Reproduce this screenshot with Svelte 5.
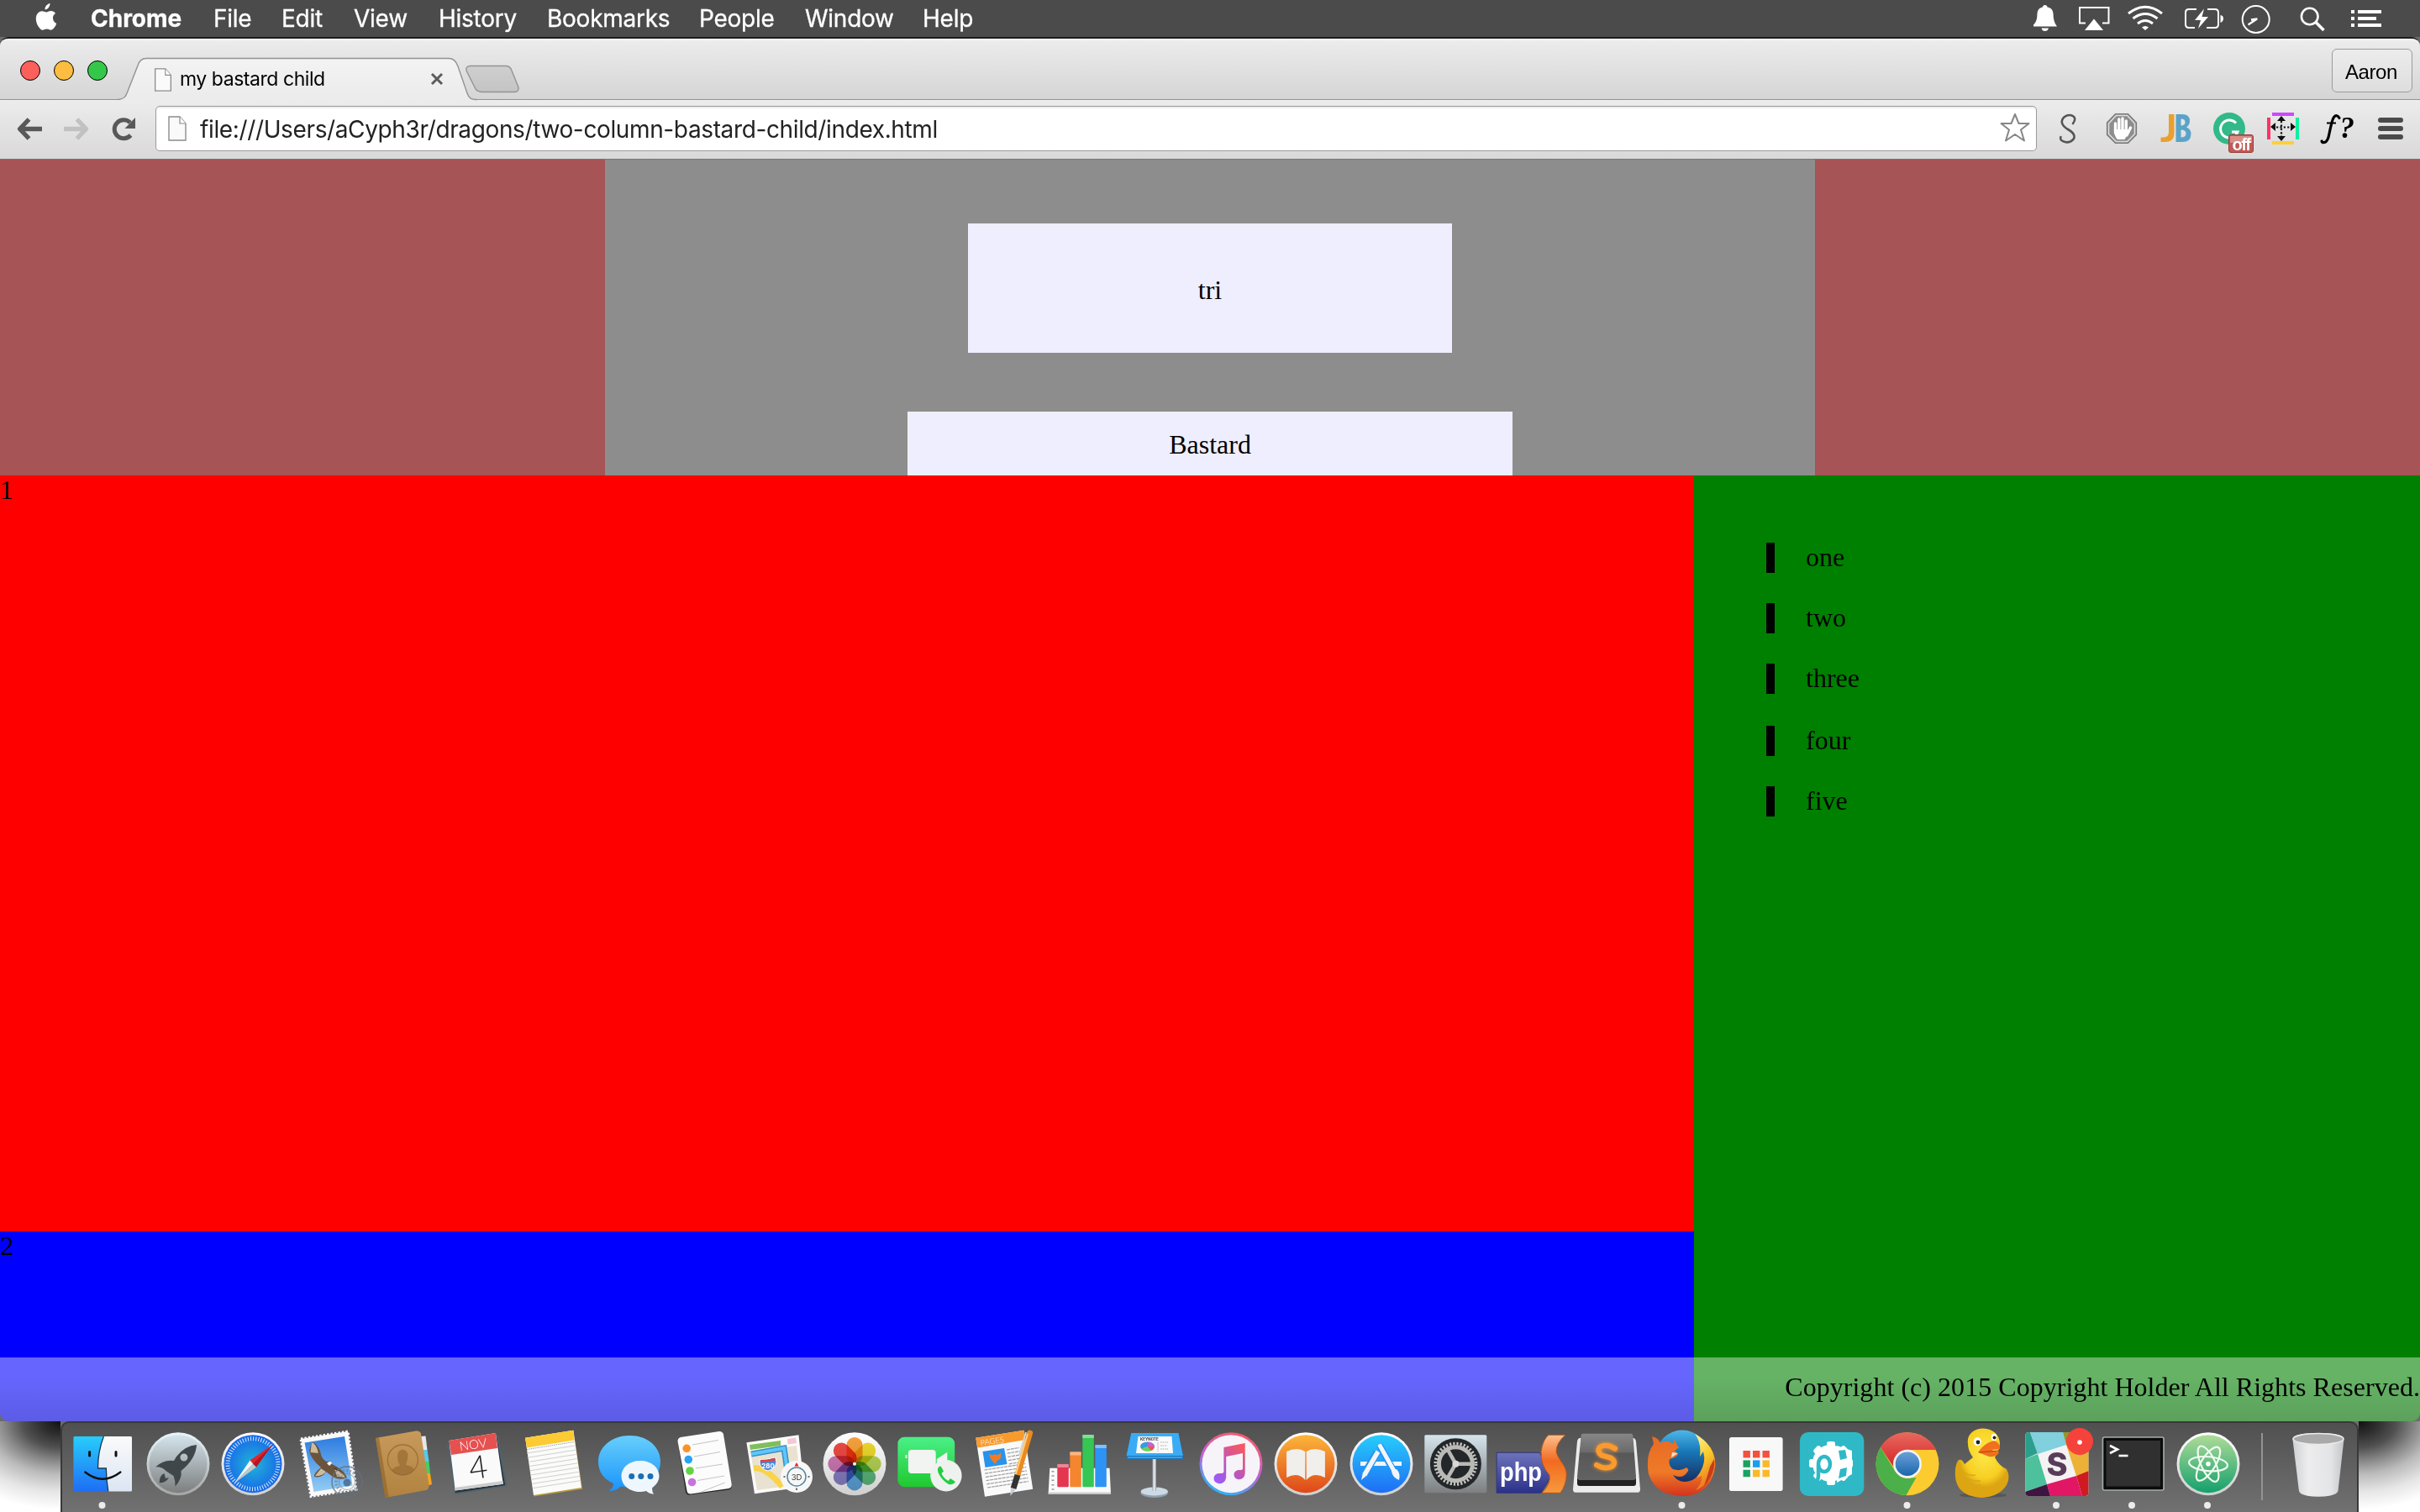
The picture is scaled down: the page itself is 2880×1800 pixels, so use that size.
<script>
  const menus = ['File', 'Edit', 'View', 'History', 'Bookmarks', 'People', 'Window', 'Help'];
  const items = ['one', 'two', 'three', 'four', 'five'];
  const petals = ['#f7a23c', '#efd92c', '#b5d653', '#5dba7c', '#5da7df', '#8b80c8', '#d079b5', '#ee4a43'];
  const tiles = ['#f4513f', '#f4513f', '#f4513f', '#1aa260', '#1b9df0', '#fbb928', '#1aa260', '#fbb928', '#fbb928'];
  const lines = [0, 1, 2, 3, 4, 5, 6, 7, 8, 9, 10];
  const cogs = [0, 45, 90, 135, 180, 225, 270, 315];
</script>

<svg class="defs" aria-hidden="true">
  <defs>
    <linearGradient id="blue" x2="0" y2="1"><stop stop-color="#27cdfb" /><stop offset="1" stop-color="#1e6ef5" /></linearGradient>
    <linearGradient id="pale" x2="0" y2="1"><stop stop-color="#fafafa" /><stop offset="1" stop-color="#dbe6f3" /></linearGradient>
    <linearGradient id="silver" x2="0" y2="1"><stop stop-color="#d5e4ec" /><stop offset="1" stop-color="#7c7f7f" /></linearGradient>
    <linearGradient id="rim" x2="0" y2="1"><stop stop-color="#fff" /><stop offset="1" stop-color="#cfcfcf" /></linearGradient>
    <linearGradient id="lrim" x2="0" y2="1"><stop stop-color="#e8f6fb" /><stop offset="1" stop-color="#a5a5a5" /></linearGradient>
    <radialGradient id="safari"><stop stop-color="#20b6d8" /><stop offset="1" stop-color="#1867e8" /></radialGradient>
    <linearGradient id="sky" x2="0" y2="1"><stop stop-color="#2d7be0" /><stop offset="1" stop-color="#93cdf5" /></linearGradient>
    <linearGradient id="tan" x2="0" y2="1"><stop stop-color="#c79a5c" /><stop offset="1" stop-color="#b1823f" /></linearGradient>
    <linearGradient id="msg" x2="0" y2="1"><stop stop-color="#67cffc" /><stop offset="1" stop-color="#1a94fb" /></linearGradient>
    <linearGradient id="green" x2="0" y2="1"><stop stop-color="#4bf087" /><stop offset="1" stop-color="#1fc82f" /></linearGradient>
    <linearGradient id="itunes" x1=".7" x2=".3" y2="1"><stop stop-color="#fb5a63" /><stop offset=".5" stop-color="#c65fd0" /><stop offset="1" stop-color="#23b9fb" /></linearGradient>
    <linearGradient id="note" x1=".8" x2=".1" y2="1"><stop stop-color="#f95762" /><stop offset=".6" stop-color="#b457c4" /><stop offset="1" stop-color="#9a5bff" /></linearGradient>
    <linearGradient id="books" x2="0" y2="1"><stop stop-color="#fcb63b" /><stop offset="1" stop-color="#de4718" /></linearGradient>
    <linearGradient id="php" x2="0" y2="1"><stop stop-color="#6d73bb" /><stop offset="1" stop-color="#2b3188" /></linearGradient>
    <linearGradient id="phps" x2="0" y2="1"><stop stop-color="#fcc08c" /><stop offset=".45" stop-color="#f26a1f" /><stop offset="1" stop-color="#f79a3e" /></linearGradient>
    <linearGradient id="key" x2="0" y2="1"><stop stop-color="#878787" /><stop offset=".4" stop-color="#6a6a6a" /><stop offset=".42" stop-color="#585858" /><stop offset="1" stop-color="#626262" /></linearGradient>
    <linearGradient id="globe" x2="0" y2="1"><stop stop-color="#4cb8ea" /><stop offset=".4" stop-color="#1878b8" /><stop offset="1" stop-color="#182a60" /></linearGradient>
    <linearGradient id="fox" x2="0" y2="1"><stop stop-color="#e86a24" /><stop offset=".6" stop-color="#ee7a28" /><stop offset="1" stop-color="#d4331c" /></linearGradient>
    <linearGradient id="flame" x2=".3" y2="1"><stop stop-color="#fff6a0" /><stop offset=".5" stop-color="#f9cb2a" /><stop offset="1" stop-color="#ec7420" /></linearGradient>
    <radialGradient id="duck" cx=".55" cy=".35"><stop stop-color="#fdea4a" /><stop offset=".75" stop-color="#f7cf22" /><stop offset="1" stop-color="#dda512" /></radialGradient>
    <linearGradient id="atom" x2="0" y2="1"><stop stop-color="#afdb98" /><stop offset="1" stop-color="#14a06c" /></linearGradient>
    <linearGradient id="bin" x2="1" y2="0"><stop stop-color="#cfd1d3" /><stop offset=".3" stop-color="#ededee" /><stop offset=".75" stop-color="#e3e4e6" /><stop offset="1" stop-color="#c3c5c8" /></linearGradient>
    <linearGradient id="stem" x2="1" y2="0"><stop stop-color="#9aa3ab" /><stop offset=".5" stop-color="#eef3f7" /><stop offset="1" stop-color="#8d98a1" /></linearGradient>
    <linearGradient id="cred" x2="0" y2="1"><stop stop-color="#e8695f" /><stop offset="1" stop-color="#d42427" /></linearGradient>
    <linearGradient id="cblue" x2="0" y2="1"><stop stop-color="#6aa0d8" /><stop offset="1" stop-color="#1c66ac" /></linearGradient>
    <linearGradient id="tabfill" x2="0" y2="1"><stop stop-color="#f3f3f3" /><stop offset="1" stop-color="#ebebeb" /></linearGradient>
    <linearGradient id="newtab" x2="0" y2="1"><stop stop-color="#cfcfcf" /><stop offset="1" stop-color="#c4c4c4" /></linearGradient>
  </defs>
</svg>

{#snippet page()}
  <svg class="doc" viewBox="0 0 22 30"><path d="M1 1H14L21 9V29H1Z" fill="#fafafa" stroke="#8c8c8c" stroke-width="1.4" /><path d="M14 1V9H21" fill="#fff" stroke="#8c8c8c" stroke-width="1.2" /></svg>
{/snippet}

<div class="screen">
  <header class="menubar">
    <svg class="apple" viewBox="0 0 27 33">
      <path d="M18.500 0C18.800 3.500 15.800 7.500 12.600 7.400 12.200 3.800 15.200 .6 18.500 0ZM22 17.200C22 13.700 24.800 12 25 11.900 23.300 9.500 20.800 9.200 19.900 9.100 17.600 8.900 15.400 10.500 14.200 10.500 13 10.500 11.200 9.200 9.300 9.200 6.700 9.200 4.400 10.700 3.100 13 .4 17.500 2.400 24.300 5 28 6.300 29.800 7.800 31.900 9.800 31.800 11.700 31.700 12.400 30.600 14.700 30.600 16.900 30.600 17.600 31.800 19.600 31.800 21.600 31.700 22.900 29.900 24.200 28.100 25.600 26 26.200 24 26.200 23.900 26.200 23.900 22 22.200 22 17.200Z" fill="#fff" />
    </svg>
    <nav>
      <b>Chrome</b>
      {#each menus as m}<span>{m}</span>{/each}
    </nav>
    <svg class="status" viewBox="2420 0 460 44" fill="none" stroke="#fff" stroke-width="2">
      <path d="M2420 29.500Q2424.500 26 2424.500 16C2425 11 2428 9 2431 8.500Q2431 6 2433.700 6T2436.500 8.500C2440 9 2443 11 2443.500 16Q2443.500 26 2448 31.500H2420ZM2429.500 33.500H2438Q2437 37 2433.700 37T2429.500 33.500Z" fill="#fff" stroke="none" />
      <path d="M2482 27.500H2475V9H2509.500V27.500H2502" /><path d="M2492 22.500L2503 36H2481Z" fill="#fff" stroke="none" />
      <g stroke-width="3"><path d="M2533 16Q2553 .5 2573 16M2538.500 22Q2553 11 2567.500 22M2544 28Q2553 21 2562 28" /></g><path d="M2549 32.500Q2553 29.500 2557 32.500L2553 36Z" fill="#fff" stroke="none" />
      <path d="M2614 11H2605Q2601 11 2601 15V29Q2601 33 2605 33H2612M2627 11H2636Q2640 11 2640 15V29Q2640 33 2636 33H2626" /><path d="M2642.500 18Q2646 18.500 2646 22T2642.500 27ZM2623 10.500L2612 24H2619L2616 34L2628 20H2620.500Z" fill="#fff" stroke="none" />
      <circle cx="2684.700" cy="23" r="16" /><path d="M2675.500 29.500L2686 22.500M2679 23.500L2686.500 22.500" stroke-width="2.400" />
      <circle cx="2748.700" cy="19.500" r="9.800" stroke-width="2.600" /><path d="M2756 26.500L2765.500 36" stroke-width="3.600" />
      <path d="M2798 14H2802M2798 22H2802M2798 30H2802M2806 14H2834M2806 22H2828M2806 30H2834" stroke-width="4" />
    </svg>
  </header>

  <div class="desk">
    <section class="window">
      <div class="tabstrip">
        <div class="lights"><i class="red"></i><i class="yellow"></i><i class="lime"></i></div>
        <div class="tab">
          <svg class="shape" viewBox="140 68 480 52">
            <path d="M140 118.500C149 118 150 114 153 106L164 78C166 71.500 169 69.500 174 69.500H534C540 69.500 543 73 545 79L556 111C558 116.500 560 118.500 568 118.500V121H140Z" fill="url(#tabfill)" />
            <path d="M140 118.500C149 118 150 114 153 106L164 78C166 71.500 169 69.500 174 69.500H534C540 69.500 543 73 545 79L556 111C558 116.500 560 118.500 568 118.500" fill="none" stroke="#929292" stroke-width="1.400" />
            <path d="M560 78.500H602Q607 78.500 609 84L617 104Q618 109.500 612 109.500H573Q567 109 565 104L555 84Q554 78.500 560 78.500Z" fill="url(#newtab)" stroke="#939393" stroke-width="1.400" />
          </svg>
          {@render page()}
          <span class="title">my bastard child</span>
          <svg class="close" viewBox="0 0 16 16"><path d="M2 2L14 14M14 2L2 14" stroke="#5c5c5c" stroke-width="3" /></svg>
        </div>
        <div class="user">Aaron</div>
      </div>
      <div class="toolbar">
        <svg class="nav" viewBox="0 119 185 70" fill="none">
          <path d="M50 153.500H24M34.500 142L23.500 153.500L34.500 165" stroke="#585858" stroke-width="5.400" stroke-linejoin="round" />
          <path d="M76 153.500H102M91.500 142L102.500 153.500L91.500 165" stroke="#c1c1c1" stroke-width="5.400" stroke-linejoin="round" />
          <path d="M155.500 161A11 11 0 1 1 155 146" stroke="#585858" stroke-width="5" /><path d="M161 140V153H148.500Z" fill="#585858" />
        </svg>
        <div class="omnibox">
          {@render page()}
          <span class="url">file:///Users/aCyph3r/dragons/two-column-bastard-child/index.html</span>
          <svg class="star" viewBox="0 0 38 38"><path d="M19 3L23.500 14H35.500L26 21.500L30 34.500L19 27L8 34.500L12 21.500L2.500 14H14.500Z" fill="#fff" stroke="#868686" stroke-width="2" stroke-linejoin="round" /></svg>
        </div>
        <svg class="exts" viewBox="2424 119 456 70">
          <path d="M2467 147C2474 138 2463 135 2457 139C2451 144 2454 150 2461 154C2470 159 2471 165 2464 168.500C2458 171 2450 167 2452.500 163" fill="none" stroke="#555" stroke-width="2.600" stroke-linecap="round" />
          <path d="M2517.500 135.500H2532.500L2542.500 146V160.500L2532.500 170.500H2517.500L2507.500 160.500V146Z" fill="#8d8d8d" stroke="#777" stroke-width="1.200" /><path d="M2518.300 137.500H2531.700L2540.500 147V159.500L2531.700 168.500H2518.300L2509.500 159.500V147Z" fill="none" stroke="#dcdcdc" stroke-width="1.600" />
          <path d="M2517.500 147V158M2521.800 142V157M2526 141V157M2530.300 144V158M2535.500 152L2531 161" stroke="#fff" stroke-width="3.400" stroke-linecap="round" /><path d="M2515.800 154H2532L2533 158L2528.500 166H2520Q2515.800 162 2515.800 154Z" fill="#fff" />
          <path d="M2581 136H2587.500V158Q2587.500 169 2577 169H2571.500V163.500H2575Q2581 163.500 2581 157Z" fill="#e9a02d" />
          <path fill-rule="evenodd" d="M2589.500 136H2597Q2606 136 2606 144Q2606 149 2602 151.500Q2607.500 153.500 2607.500 159.500Q2607.500 169 2597 169H2589.500ZM2595.500 141.500V149.500Q2600.500 149.500 2600.500 145.500T2595.500 141.500ZM2595.500 154.500V163.500Q2601.500 163.500 2601.500 159T2595.500 154.500Z" fill="#5aa3c9" />
          <circle cx="2653" cy="153" r="19" fill="#31b989" /><path d="M2661 146.500A10.500 10.500 0 1 0 2663 157H2656" fill="none" stroke="#fff" stroke-width="3" />
          <rect x="2652.500" y="160.500" width="29" height="21" rx="2.500" fill="#c05a55" stroke="#9b3d38" /><path d="M2654 162H2680V170H2654Z" fill="#d98e88" />
          <text x="2667" y="179" text-anchor="middle" class="off">off</text>
          <path d="M2704 134H2730V138H2704Z" fill="#cf46ff" /><path d="M2704 168H2730V172H2704Z" fill="#ffd02d" /><path d="M2698 140H2702V166H2698Z" fill="#ff3265" /><path d="M2732 140H2736V166H2732Z" fill="#0ff0a0" />
          <path d="M2715 138L2720 144H2710ZM2715 168L2710 162H2720ZM2702 151L2708 146V156ZM2732 151L2726 146V156Z" fill="#111" /><path d="M2709 151.500H2726M2715 144V163" stroke="#111" stroke-width="2.200" stroke-dasharray="2.200 2.200" />
          <path d="M2784 140.500Q2781 135.500 2777.500 139.500Q2775.500 142 2772 159Q2770.500 168.500 2766.500 169.500Q2763.500 170 2763 168" fill="none" stroke="#000" stroke-width="3.200" stroke-linecap="round" /><path d="M2769 146.500H2780" stroke="#000" stroke-width="2" />
          <text x="2784.500" y="164" class="fq">?</text>
          <path d="M2833 143H2857M2833 153H2857M2833 163H2857" stroke="#4a4a4a" stroke-width="6" stroke-linecap="round" />
        </svg>
      </div>

      <div class="page">
        <div class="hero"><div class="mid"><div class="tri">tri</div><div class="bastard">Bastard</div></div></div>
        <div class="cols">
          <div class="left"><div class="one">1</div><div class="two">2</div></div>
          <ul>{#each items as item}<li><span>{item}</span></li>{/each}</ul>
        </div>
        <footer>Copyright (c) 2015 Copyright Holder All Rights Reserved.</footer>
      </div>
    </section>

    <div class="below">
      <div class="shade"></div>
      <div class="dock">
        <!-- Finder -->
        <svg class="app" viewBox="0 0 90 108">
          <rect x="10.400" y="18" width="69.600" height="65.500" rx="1.500" fill="url(#blue)" /><path d="M46.400 18H78.500Q80 18 80 19.500V82Q80 83.500 78.500 83.500H51.800Q49.500 70 49.300 56H39.500Q39.500 36 46.400 18Z" fill="url(#pale)" /><path d="M46.400 18Q39.500 36 39.500 56H49.300Q49.500 70 51.800 83.500" fill="none" stroke="#17384f" stroke-width="1.300" />
          <path d="M29.600 36.500V41M61 36.500V41" stroke="#111" stroke-width="3" stroke-linecap="round" /><path d="M24.300 60.500Q45 77 66.400 60.500" fill="none" stroke="#111" stroke-width="2.300" stroke-linecap="round" /><circle cx="44.500" cy="100" r="4" fill="#ececec" />
        </svg>
        <!-- Launchpad -->
        <svg class="app" viewBox="0 0 90 108">
          <circle cx="45" cy="50.700" r="37.500" fill="url(#lrim)" /><circle cx="45" cy="50.700" r="34.500" fill="url(#silver)" />
          <path fill-rule="evenodd" d="M67 28Q53 29 43 42L40 47Q28 45 18.300 54.300Q26 54 31 59.500L39.500 65Q42 71 41.500 77.500Q50 68 48.500 59Q66 45 67 28ZM51.900 38.500A4.500 4.500 0 1 0 51.900 47.500A4.500 4.500 0 1 0 51.900 38.500Z" fill="#3f474b" /><path d="M28.500 62Q23 64 22.600 73Q30 74 34 67L30 68Z" fill="#3f474b" />
        </svg>
        <!-- Safari -->
        <svg class="app" viewBox="0 0 90 108">
          <circle cx="45" cy="50.700" r="37.500" fill="url(#rim)" /><circle cx="45" cy="50.700" r="34.500" fill="url(#safari)" /><circle cx="45" cy="50.700" r="30" fill="none" stroke="#d9eefc" stroke-width="5" stroke-dasharray="1 2.140" />
          <path d="M68 28L41.500 46.500L49 54.500Z" fill="#e02530" /><path d="M68 28L45 50.700L49 54.500Z" fill="#b9141f" /><path d="M22.600 74L41.500 46.500L45 50.700Z" fill="#f5f5f5" /><path d="M22.600 74L49 54.500L45 50.700Z" fill="#c3c7ca" />
        </svg>
        <!-- Mail -->
        <svg class="app" viewBox="0 0 90 108">
          <path d="M12 21L68 12L78 81L24 89.500Z" fill="#fafafa" stroke="#fafafa" stroke-width="3" stroke-dasharray="2.500 2" /><path d="M16.500 25.500L64 18L73.500 76.500L27.500 84Z" fill="url(#sky)" />
          <path d="M25 25Q32 26 35 36Q37 46 43 48Q47 46 49 51Q63 57 67 67Q60 71 50 66L42 60Q37 68 28 66Q27 62 36 55Q24 45 22 35Z" fill="#6b543b" /><path d="M25 25Q31 27 33 38L25 36ZM52 56Q62 60 65 67L55 66ZM36 56L42 60Q38 66 30 65Z" fill="#d0bf a4" /><path d="M25 25Q31 27 33 38L23.500 37ZM52 57Q62 60 65 67L55 66ZM36 56L42 60Q38 66 29 65Z" fill="#cdbb9c" /><path d="M43 50Q47 46 49 50L46 53Z" fill="#fff" />
          <circle cx="67" cy="72" r="18" fill="none" stroke="#636f80" stroke-width="1.800" opacity=".7" /><circle cx="67" cy="72" r="13" fill="none" stroke="#636f80" stroke-width="4" stroke-dasharray="2 2" opacity=".5" /><circle cx="67" cy="72" r="9.500" fill="none" stroke="#636f80" opacity=".6" /><circle cx="67" cy="73" r="4.500" fill="#3f5578" opacity=".7" />
        </svg>
        <!-- Contacts -->
        <svg class="app" viewBox="0 0 90 108">
          <path d="M66 18L71.500 17.500L73.500 34H68Z" fill="#e7e7e7" /><path d="M68 34H73.500L75.500 48H70Z" fill="#56c9ee" /><path d="M70 48H75.500L77 62H72Z" fill="#44cf63" /><path d="M72 62H77L79 75L73 77Z" fill="#f4a41e" />
          <path d="M12 20L60 11.500Q65 11 66 15L75.500 76Q76 81 72 82L23.500 91Z" fill="url(#tan)" /><path d="M12 20L16 19.500L27.500 90L23.500 91Z" fill="#8d6127" opacity=".6" /><circle cx="44.400" cy="46" r="18" fill="none" stroke="#94692f" stroke-width="1.300" opacity=".8" /><path d="M31 58Q35 54 41 53Q37 46 38.500 38Q41 33 46 34Q52 36 50 45L48 52Q55 53 58 57Q51 65 44 64Q36 64 31 58Z" fill="#94692f" opacity=".65" />
        </svg>
        <!-- Calendar -->
        <svg class="app" viewBox="0 0 90 108">
          <path d="M7 27L68 17L78.500 77L16.500 87Z" fill="#50626e" /><path d="M11 27L66 18L76 76L17 85Z" fill="#26323a" /><path d="M9.500 23L64.900 14L73.800 74.700L16.700 82.500Z" fill="#fafafa" /><path d="M9.500 23L64.900 14L67 32L12 40Z" fill="#e65150" /><path d="M16 79L73.500 71L73.800 74.700L16.700 82.500Z" fill="#ccc" />
          <text x="38" y="33" class="light" font-size="15" fill="#fff" text-anchor="middle" transform="rotate(-8 38 28)">NOV</text><text x="44" y="68" class="light" font-size="38" fill="#222" text-anchor="middle" transform="rotate(-8 44 55)">4</text>
        </svg>
        <!-- Notes -->
        <svg class="app" viewBox="0 0 90 108">
          <path d="M11.100 19.700L68.300 10.700L79 80.700L21.500 89.500Z" fill="#b9983e" /><path d="M11.100 19.700L68.300 10.700L78 79L21 88Z" fill="#fbfbfa" /><path d="M11.100 19.700L68.300 10.700L69.500 22.500L13 31.500Z" fill="#fccb33" />
          <path d="M13 33.500L69.500 24.500" stroke="#a0a0a0" stroke-dasharray="1.500 1" />
          {#each lines.slice(0, 9) as l}<path d="M13 38L70 29" stroke="#cfcfcf" transform="translate({l * 0.9} {l * 5.2})" />{/each}
        </svg>
        <!-- Messages -->
        <svg class="app" viewBox="0 0 90 108">
          <path d="M45.200 17C66 17 82 30 82 48S66 78.500 45 78.500Q40 78.500 35 77.500Q29 83 20.900 83Q26 79 26 74Q8 66 8 48C8 30 25 17 45.200 17Z" fill="url(#msg)" /><path d="M58 47C71 47 80.500 55 80.500 65.500Q80.500 73 72 79.500Q72 84 74 86.700Q68 86 65 83Q61 84 58 84C45 84 35.500 76 35.500 65.500S45 47 58 47Z" fill="#eef7fd" /><path d="M47.700 65.600H47.710M58.800 65.600H58.810M70 65.600H70.010" stroke="#1a6fb5" stroke-width="7" stroke-linecap="round" />
        </svg>
        <!-- Reminders -->
        <svg class="app" viewBox="0 0 90 108">
          <path d="M13.500 24L23 84Q24 88 28 87.500L74 81.500Q78 80.500 77.500 77L68 16Z" fill="#222" /><path d="M17 19L63 12Q67 12 68 15.500L77.700 75Q78 79 74.500 80L29 86.500Q25 86.500 24.500 83L13.500 24Q13.500 20 17 19Z" fill="#fcfcfc" /><path d="M31 28L62 22.500M33 42L64 36.500M35 56L67 51M37 70.500L69 65M39 85L71 72.500" stroke="#c4c4c4" stroke-dasharray="33 100" />
          <circle cx="24.200" cy="32.300" r="4.800" fill="#fb922a" /><circle cx="26.300" cy="45.600" r="4.800" fill="#27a4f3" /><circle cx="28" cy="59" r="4.800" fill="#61d541" /><circle cx="30.600" cy="72.500" r="4.800" fill="#c873dd" />
        </svg>
        <!-- Maps -->
        <svg class="app" viewBox="0 0 90 108">
          <path d="M5.400 25.300L67.500 16.300L74 78L15 86.300Z" fill="#fbfbfb" /><path d="M10 36L65 29L70 75L18 82Z" fill="#e9e2d1" /><path d="M9 28L46 23V29L10 34Z" fill="#7fbf59" /><path d="M54 21L64 19.500L65 26L54.500 27.500Z" fill="#f3c7d3" /><path d="M11 39L50 32L55 66" fill="none" stroke="#3a8fc6" stroke-width="7" /><path d="M11 39L50 32L55 66" fill="none" stroke="#5cc8fa" stroke-width="4" /><path d="M14 56Q28 54 48 78" fill="none" stroke="#f9d348" stroke-width="7" /><path d="M21 46Q30 46 40 43Q44 55 31 59Q20 57 21 46Z" fill="#4b87d8" stroke="#fff" /><path d="M22 46Q31 46 39 43.500V47L22 49Z" fill="#d94545" />
          <text x="31" y="55.500" class="sans" font-size="8" font-weight="700" fill="#fff" text-anchor="middle">280</text><circle cx="65" cy="66" r="19" fill="#f7f7f7" /><circle cx="65" cy="66" r="11" fill="none" stroke="#54889f" stroke-width="1.500" /><path d="M65 49L67.500 53.500H62.500Z" fill="#e22" /><text x="65" y="69.500" class="sans" font-size="9.500" fill="#333" text-anchor="middle">3D</text><path d="M49.500 66H51.500M78.500 66H80.500M65 79.500V82" stroke="#444" stroke-width="1.500" />
        </svg>
        <!-- Photos -->
        <svg class="app" viewBox="0 0 90 108">
          <circle cx="45" cy="50.700" r="37.500" fill="url(#rim)" /><g class="multiply">{#each petals as c, i}<rect x="35.500" y="19" width="19" height="31.500" rx="9.500" fill={c} transform="rotate({i * 45} 45 50.700)" />{/each}</g><circle cx="45" cy="50.700" r="2" fill="#fff" />
        </svg>
        <!-- FaceTime -->
        <svg class="app" viewBox="0 0 90 108">
          <rect x="6.400" y="18.700" width="67.800" height="59.500" rx="8" fill="url(#green)" /><rect x="18.900" y="34" width="32.800" height="28" rx="4" fill="#f1f4f1" /><path d="M52.800 45L65.300 36.700V60L52.800 52Z" fill="#f1f4f1" /><path d="M16.500 40V44" stroke="#eee" stroke-width="2" /><circle cx="63.900" cy="64.700" r="18.700" fill="#eef2ee" /><path d="M55.500 54Q52 57 56 64T67 75Q72 76 75 72L69 68L66.500 71Q60 67 58.500 62L61 59.500L58 54Q56.500 53 55.500 54Z" fill="#22ce42" />
        </svg>
        <!-- Pages -->
        <svg class="app" viewBox="0 0 90 108">
          <path d="M10.300 19.700L67.500 10.700L78.200 80.700L21 89.700Z" fill="#fafafa" /><path d="M10.300 19.700L67.500 10.700L69.500 22L12.500 31.500Z" fill="#f99a2c" /><text x="16" y="29" class="light" font-size="9.500" fill="#fff" transform="rotate(-8 16 29)">PAGES</text><path d="M18.500 36L44 32L47.500 51L21.500 55Z" fill="#2893ea" /><path d="M26 38Q29 42 33 39Q37 42 40 37Q42 46 35 47L34 51Q27 46 26 38Z" fill="#f47a20" />
          {#each lines as l}<path d={l < 5 ? 'M47 34L62 31.500' : 'M17 33L66 25.500'} stroke="#9d9d9d" stroke-width="1.200" stroke-dasharray="4 .8" transform="translate({l * 0.7} {l * 4.2 + (l > 4 ? 4 : 0)})" />{/each}
          <path d="M74.600 14L59 67" stroke="#e98a1f" stroke-width="7" stroke-linecap="round" /><path d="M72 15L57.500 64" stroke="#ffd07c" stroke-width="2" /><path d="M60 64L55 80" stroke="#333" stroke-width="7" /><path d="M52 79L58 81L51.400 88.700Z" fill="#c8d0d5" /><path d="M70 13L62 40" stroke="#cfd6da" stroke-width="2" />
        </svg>
        <!-- Numbers -->
        <svg class="app" viewBox="0 0 90 108">
          <path d="M8.300 55.700H79.500L81 86.500H6.600Z" fill="#fafafa" /><path d="M6.600 84.500H81V86.500H6.600Z" fill="#cfcfcf" /><path d="M12 59V82" stroke="#999" stroke-width="3" stroke-dasharray="1.500 3.800" />
          <rect x="17.300" y="50.700" width="13.500" height="27.600" rx="1" fill="#e4364f" /><rect x="32.300" y="36.300" width="13.500" height="42" rx="1" fill="#f5852f" /><rect x="47.300" y="16" width="13.500" height="62.300" rx="1" fill="#35c653" /><rect x="62.300" y="28" width="13.500" height="50.300" rx="1" fill="#2d94f5" /><path d="M17.300 53H30.800M32.300 38.500H45.800M47.300 18H60.800M62.300 30H75.800" stroke="#fff" stroke-width="4" opacity=".4" />
        </svg>
        <!-- Keynote -->
        <svg class="app" viewBox="0 0 90 108">
          <ellipse cx="43.800" cy="85" rx="16.500" ry="6" fill="#8ea1b1" /><ellipse cx="43.800" cy="83.500" rx="16" ry="5" fill="#cddae5" /><path d="M41.500 45H46V83H41.500Z" fill="url(#stem)" /><path d="M16.300 14H72.400L77.800 40V45H10.600V40Z" fill="#1b75bf" /><path d="M16.300 14H72.400L77.800 41H10.600Z" fill="#3aacf5" /><path d="M12 43H77" stroke="#5acbf5" /><path d="M24.500 18H64.500L66 38H22Z" fill="#fafafa" /><text x="27" y="22.500" class="sans" font-size="4.500" font-weight="700" fill="#333">KEYNOTE</text><ellipse cx="35.500" cy="30" rx="8.500" ry="5.500" fill="#329be6" /><path d="M35.500 30V24.500Q43 25 44 30Z" fill="#c063df" /><path d="M35.500 30L44 30Q43 34 40 35Z" fill="#f3583a" /><path d="M35.500 30L40 35Q33 37 28 32.500Z" fill="#6fd44c" /><path d="M48 25V36M51 25H60M51 29H59M51 33H60" stroke="#aaa" stroke-dasharray="1.500 1" />
        </svg>
        <!-- iTunes -->
        <svg class="app" viewBox="0 0 90 108">
          <circle cx="45" cy="50.700" r="37.500" fill="url(#itunes)" /><circle cx="45" cy="50.700" r="34.500" fill="#f6f4f9" /><path d="M36.400 31L61.700 26V62Q61 69.500 54 69.300Q48 68 48.500 62.500Q50 57.500 56 58Q59 58 59 56V38L39.200 42V67Q38 74.500 31 74.300Q24 73 24.500 67Q26 61.500 32.500 62Q36.400 62 36.400 60Z" fill="url(#note)" />
        </svg>
        <!-- iBooks -->
        <svg class="app" viewBox="0 0 90 108">
          <circle cx="45" cy="50.700" r="37.500" fill="url(#rim)" /><circle cx="45" cy="50.700" r="34.500" fill="url(#books)" /><path d="M44.300 70Q36 60 22.100 67V36Q35 30 44.300 36ZM45.700 70Q54 60 67.900 67V36Q55 30 45.700 36Z" fill="#f1efec" />
        </svg>
        <!-- App Store -->
        <svg class="app" viewBox="0 0 90 108">
          <circle cx="45" cy="50.700" r="37.500" fill="url(#rim)" /><circle cx="45" cy="50.700" r="34.500" fill="url(#blue)" /><g stroke="#f2f5f8" fill="none"><path d="M20 50.500H69" stroke-width="5" /><path d="M40 37L23 66" stroke="#2493f5" stroke-width="9" /><path d="M41 36L25 63.500" stroke-width="5.500" /><path d="M43 29L60 60" stroke="#2493f5" stroke-width="8" /><path d="M43.500 29.500L60 59" stroke-width="5" stroke-linecap="round" /></g><path d="M23 61L28 64L21 70ZM57 59L63 57Q68 62 66 70Q58 67 57 59Z" fill="#f2f5f8" />
        </svg>
        <!-- System Preferences -->
        <svg class="app" viewBox="0 0 90 108">
          <rect x="7.300" y="16.300" width="74" height="69" rx="1.500" fill="url(#silver)" /><circle cx="44.400" cy="50.700" r="30.500" fill="#24272a" /><circle cx="44.400" cy="50.700" r="24" fill="none" stroke="#c4c4c2" stroke-width="4" stroke-dasharray="2.200 2" /><circle cx="44.400" cy="50.700" r="20" fill="none" stroke="#b9b9b6" stroke-width="5" /><path d="M44.400 50.700H63M44.400 50.700L35 34M44.400 50.700L35 67" stroke="#b9b9b6" stroke-width="4.500" /><circle cx="44.400" cy="50.700" r="4" fill="#d9d9d6" />
        </svg>
        <!-- PhpStorm -->
        <svg class="app" viewBox="0 0 90 108">
          <path d="M3.100 37.300H54L70 62L56 85.300H3.100Z" fill="url(#php)" stroke="#30367f" /><path d="M65 16.300H85Q74 26 74 36C76 46 86 52 86.300 63Q86 76 79 85.300H57Q68 74 66 64Q55 52 56 36Q58 22 65 16.300Z" fill="url(#phps)" stroke="#b4571b" /><text x="7" y="71" class="phpword" textLength="50" lengthAdjust="spacingAndGlyphs">php</text>
        </svg>
        <!-- Sublime Text -->
        <svg class="app" viewBox="0 0 90 108">
          <path d="M13 20H77Q79 20 80 24L85 81Q85 84.700 82 84.700H8Q5 84.700 5 81L10 24Q11 20 13 20Z" fill="#ececec" /><path d="M10 68H80V74Q80 77 77 77H13Q10 77 10 74Z" fill="#222" /><path d="M17 14.700H74Q76 14.700 76.400 17L80 66Q80 70 77 70H13Q10 70 10 66L14.600 17Q15 14.700 17 14.700Z" fill="url(#key)" /><path d="M55 32.500Q45 26 37 30.500Q33 36 39 40.500L50 43.500Q57 48 52 53.500Q43 58 33 52" fill="none" stroke="#fb9a2d" stroke-width="6" stroke-linecap="round" class="glow" />
        </svg>
        <!-- Firefox -->
        <svg class="app" viewBox="0 0 90 108">
          <circle cx="45" cy="42" r="31.500" fill="url(#globe)" /><path d="M62 17Q85 30 84.400 53Q80 85 50 89Q14 90 5 63Q1 40 11 27L9 18Q17 20 19 26Q27 21 34 27L36 21Q38 28 41 31L36 35L40 39Q38 43 30 45Q28 53 34 57Q43 60 50 55Q53 57 52 59Q46 70 34 64Q42 76 57 70Q72 61 71 43Q69 27 62 17Z" fill="url(#fox)" /><path d="M60 15Q82 27 84 48Q80 75 61 82Q70 72 68 65L62 67Q75 50 70 36L66 42Q68 25 60 15Z" fill="url(#flame)" /><path d="M83 45Q85 62 71 77Q76 62 78 54Z" fill="#c93b18" /><path d="M33 37L40 38L32 43Z" fill="#f5e0c8" /><circle cx="44.500" cy="100" r="4" fill="#ececec" />
        </svg>
        <!-- App Launcher -->
        <svg class="app" viewBox="0 0 90 108">
          <rect x="12" y="19" width="63.600" height="64" rx="2.500" fill="#f8f8f8" />{#each tiles as t, i}<rect x={28.5 + (i % 3) * 11.5} y={35 + Math.floor(i / 3) * 11.4} width="8.400" height="8.400" fill={t} />{/each}
        </svg>
        <!-- Plugin manager -->
        <svg class="app" viewBox="0 0 90 108">
          <rect x="5.900" y="13" width="76.400" height="76" rx="10" fill="#2fb9c7" /><g fill="#fff"><ellipse cx="42" cy="50" rx="21" ry="22" />{#each cogs as a}<rect x="38" y="24" width="10" height="12" rx="2.500" transform="rotate({a} 43 50)" />{/each}<path d="M50 29L68 35V47H52ZM50 52H68V63L50 73Z" /></g><path d="M52 35L60 34L62 44L54 46ZM54 57L62 55L61 65L52 68Z" fill="#2fb9c7" /><ellipse cx="35" cy="51" rx="7" ry="9" fill="none" stroke="#2fb9c7" stroke-width="4.500" /><path d="M28 52V65Q28 71 23 73" fill="none" stroke="#2fb9c7" stroke-width="4.500" />
        </svg>
        <!-- Chrome -->
        <svg class="app" viewBox="0 0 90 108">
          <circle cx="45" cy="50.700" r="37.500" fill="#fbcb2f" /><path d="M13 31Q24 13 45 13.200Q69 14 79.500 34H45Q29 36 29 55Z" fill="url(#cred)" /><path d="M13 31L29.500 58Q35 68 46 68L55.500 67L43.500 88Q17 87 8 58Q6 42 13 31Z" fill="#4bb04a" /><circle cx="45" cy="50.700" r="17" fill="#f3f3f3" /><circle cx="45" cy="50.700" r="14.300" fill="url(#cblue)" /><circle cx="44.500" cy="100" r="4" fill="#ececec" />
        </svg>
        <!-- Cyberduck -->
        <svg class="app" viewBox="0 0 90 108">
          <ellipse cx="45" cy="88" rx="28" ry="3" fill="#444" opacity=".5" /><path d="M27 27C25 15 35 8.500 45 8.500C57 9 65 16 65 27Q64 36 59 43Q64 53 73 57Q78 66 73 76Q64 90 43 91Q14 89 12 66Q11 54 15 47Q19 43 23 51L33 43Q27 35 27 27Z" fill="url(#duck)" /><path d="M18 50Q16 72 42 71M19 56Q24 66 36 64M20 63Q22 78 42 76" fill="none" stroke="#d9a716" stroke-width="1.500" /><path d="M39 37Q46 26 58 23Q66 26 65 33L55 34L64 37Q62 43 52 42Z" fill="#f0701d" /><path d="M40 37L64 35" stroke="#b9400f" stroke-width="1.200" /><ellipse cx="38.300" cy="24.300" rx="4.500" ry="5" fill="#fff" /><circle cx="39" cy="25" r="2.400" fill="#222" /><ellipse cx="58" cy="19" rx="3.200" ry="4.200" fill="#fff" /><circle cx="58.500" cy="19.500" r="2" fill="#222" />
        </svg>
        <!-- Slack -->
        <svg class="app" viewBox="0 0 90 108">
          <clipPath id="sq"><rect x="6.400" y="13" width="75" height="76" rx="4" /></clipPath><g clip-path="url(#sq)"><path d="M6 13H82V89H6Z" fill="#f4f2f2" /><path d="M6 13H12L21 38L6 45Z" fill="#2c9f8c" /><path d="M12 13H51L55 28L21 39Z" fill="#80d0de" /><path d="M51 13H82V20L55 28Z" fill="#8d9a2c" /><path d="M55 28L82 19V61L67 65Z" fill="#ecb136" /><path d="M6 45L21 39L32 75L6 84Z" fill="#4cc19c" /><path d="M32 75L67 65L74 89H36Z" fill="#e11765" /><path d="M67 65L82 59V89H74Z" fill="#d01a22" /><path d="M6 84L32 75L36 89H6Z" fill="#3e1440" /></g>
          <text x="44" y="65" class="sans" font-size="38" font-weight="800" fill="#593c5a" text-anchor="middle">S</text><circle cx="71" cy="24" r="16" fill="#f5423a" /><circle cx="71" cy="25" r="2.800" fill="#fff" /><circle cx="43" cy="100" r="4" fill="#ececec" />
        </svg>
        <!-- Terminal -->
        <svg class="app" viewBox="0 0 90 108">
          <rect x="8.500" y="19" width="72.500" height="63" rx="2" fill="#0b0b0b" stroke="#a3adb0" stroke-width="1.600" /><rect x="12.500" y="23" width="64.500" height="54.500" fill="#303030" /><path d="M17 29L26 33.500L17 38" fill="none" stroke="#fff" stroke-width="2.600" /><path d="M27.500 41H38.500" stroke="#fff" stroke-width="2.600" /><circle cx="43" cy="100" r="4" fill="#ececec" />
        </svg>
        <!-- Atom -->
        <svg class="app" viewBox="0 0 90 108">
          <circle cx="45" cy="50.700" r="37.500" fill="url(#rim)" /><circle cx="45" cy="50.700" r="34.500" fill="url(#atom)" /><g fill="none" stroke="#f0faf0" stroke-width="2.200" stroke-linecap="round" stroke-dasharray="105 18"><ellipse cx="45" cy="50.700" rx="23" ry="8.500" transform="rotate(5 45 50.700)" /><ellipse cx="45" cy="50.700" rx="23" ry="8.500" transform="rotate(65 45 50.700)" /><ellipse cx="45" cy="50.700" rx="23" ry="8.500" transform="rotate(122 45 50.700)" /></g><circle cx="45" cy="50.700" r="2.800" fill="#fff" /><circle cx="44" cy="100" r="4" fill="#ececec" />
        </svg>
        <i class="sep"></i>
        <!-- Trash -->
        <svg class="app" viewBox="0 0 90 108">
          <path d="M14.500 22Q14 14 45 14T75.400 22L68.500 83Q66 89.700 45 89.700T22 83Z" fill="url(#bin)" /><ellipse cx="45" cy="21" rx="30" ry="6.500" fill="#a9a9a9" stroke="#e9e9e9" stroke-width="1.600" />
        </svg>
      </div>
      <div class="shade right"></div>
    </div>
  </div>
</div>

<style>
  :global(body) { margin: 0; background: #fff; }
  .defs { position: absolute; width: 0; height: 0; }
  .screen { width: 2880px; height: 1800px; overflow: hidden; font-family: Inter, 'Open Sans', sans-serif; color: #000; }
  svg { display: block; flex: none; }

  .menubar { display: flex; align-items: flex-start; height: 44px; background: #4b4b4b; color: #fff; font-size: 28px; box-sizing: border-box; }
  .apple { width: 27px; height: 33px; margin: 4px 0 0 41px; }
  nav { display: grid; grid-template-columns: 146px 81px 86px 101px 129px 181px 126px 140px 100px; margin-left: 40px; line-height: 45px; letter-spacing: -.25px; white-space: nowrap; -webkit-text-stroke: .3px #fff; }
  nav b { font-weight: 700; letter-spacing: 0; }
  .status { width: 460px; height: 44px; margin-left: auto; }

  .desk { display: flex; flex-direction: column; height: 1756px; background: #6b6b6b; }
  .window { height: 1646px; border-top: 2px solid #1d1d1d; border-radius: 10px; overflow: hidden; display: flex; flex-direction: column; flex: none; }
  .tabstrip { height: 72px; display: flex; flex: none; border-bottom: 1px solid #929292; background: linear-gradient(#f5f5f5 0, #ebebeb 4px, #d5d5d5); }
  .lights { display: flex; gap: 15.800px; padding: 26px 0 0 23.500px; width: 116.500px; flex: none; }
  .lights i { width: 22.400px; height: 22.400px; border-radius: 50%; border: 1px solid; }
  .red { background: #fc605b; border-color: #df4744; }
  .yellow { background: #fdbd40; border-color: #de9f34; }
  .lime { background: #34c84a; border-color: #27aa35; }
  .tab { position: relative; width: 480px; height: 51px; margin-top: 22px; display: flex; align-items: center; }
  .shape { position: absolute; left: 0; top: 0; width: 480px; height: 52px; }
  .doc { position: relative; width: 22px; height: 30px; }
  .tab .doc { height: 28px; margin-left: 43px; margin-top: 2px; }
  .title { position: relative; margin-left: 9px; width: 298px; font-size: 23px; letter-spacing: -.45px; white-space: nowrap; }
  .close { position: relative; width: 16px; height: 16px; }
  .user { margin: 12px 9px 0 auto; width: 94px; height: 50px; border: 1px solid #9b9b9b; border-radius: 6px; font: 24px/54px 'Liberation Sans', sans-serif; text-align: center; background: linear-gradient(#ececec, #dedede); letter-spacing: -.4px; text-indent: -2px; }
  .toolbar { height: 70px; display: flex; flex: none; border-bottom: 1px solid #777; background: linear-gradient(#ececec, #d9d9d9); }
  .nav { width: 185px; height: 70px; }
  .omnibox { width: 2237px; height: 52px; margin-top: 7px; border: 1px solid #9a9a9a; border-radius: 5px; background: #fff; display: flex; align-items: center; box-shadow: inset 0 2px 1px #eee; }
  .omnibox .doc { margin-left: 14px; }
  .url { margin-left: 16px; padding-top: 2px; font-size: 28px; letter-spacing: -.37px; color: #222; white-space: nowrap; }
  .star { width: 38px; height: 38px; margin: 0 6px 2px auto; }
  .exts { width: 456px; height: 70px; }
  .off { font: 700 20px 'Liberation Sans', sans-serif; fill: #fff; letter-spacing: -1.500px; }
  .fq { font: italic 700 35px 'Liberation Serif', serif; }

  .page { position: relative; height: 1502px; font: 32px/34px 'Liberation Serif', 'Times New Roman', serif; }
  .hero { height: 376px; background: #a65455; display: flex; justify-content: center; overflow: hidden; }
  .mid { width: 1440px; background: #8d8d8d; display: flex; flex-direction: column; align-items: center; text-align: center; }
  .tri { width: 576px; height: 92px; padding-top: 62px; margin-top: 76px; background: #eef; }
  .bastard { width: 720px; height: 54px; padding-top: 22px; margin-top: 70px; background: #eef; }
  .cols { display: grid; grid-template-columns: 2016px 864px; height: 1126px; }
  .left { display: flex; flex-direction: column; }
  .one { height: 900px; background: #f00; }
  .two { height: 226px; background: #00f; }
  ul { margin: 0; padding: 80px 0 0 86px; list-style: none; background: #008000; display: flex; flex-direction: column; gap: 36px; }
  li { height: 36px; border-left: 10px solid #000; padding-left: 37px; }
  li:nth-child(4) { margin-top: 2px; }
  footer { position: absolute; left: 0; right: 0; bottom: 0; height: 58px; padding-top: 18px; text-align: right; letter-spacing: .036px; background: linear-gradient(transparent 30%, rgba(0, 0, 0, .1)), rgba(255, 255, 255, .4); }

  .below { display: flex; height: 108px; flex: none; }
  .shade { width: 72px; background: radial-gradient(ellipse 150px 105px at 100% 0, #111 0, #2e2e2e 15%, #505050 30%, #888 45%, #bbb 60%, #e6e6e6 80%, #fff); }
  .shade.right { width: 73px; background: radial-gradient(ellipse 150px 105px at 0 0, #111 0, #2e2e2e 15%, #505050 30%, #888 45%, #bbb 60%, #e6e6e6 80%, #fff); }
  .dock { box-sizing: border-box; width: 2735px; display: flex; align-items: flex-start; padding-left: 3px; background: linear-gradient(#505050, #717171); border: 2px solid #393939; border-bottom: 0; border-radius: 10px 10px 0 0; }
  .app { width: 90px; height: 108px; margin: -2px -.490px 0 0; overflow: visible; }
  .sep { width: 2px; height: 80px; margin: 12px 21px 0 18px; background: #939393; }
  .sans { font-family: Inter, sans-serif; }
  .light { font-family: Lato, sans-serif; font-weight: 300; }
  .phpword { font: 700 32px 'Liberation Sans', sans-serif; fill: #fff; }
  .multiply rect { mix-blend-mode: multiply; }
  .glow { filter: drop-shadow(0 0 2px #fb9a2d); }
</style>
